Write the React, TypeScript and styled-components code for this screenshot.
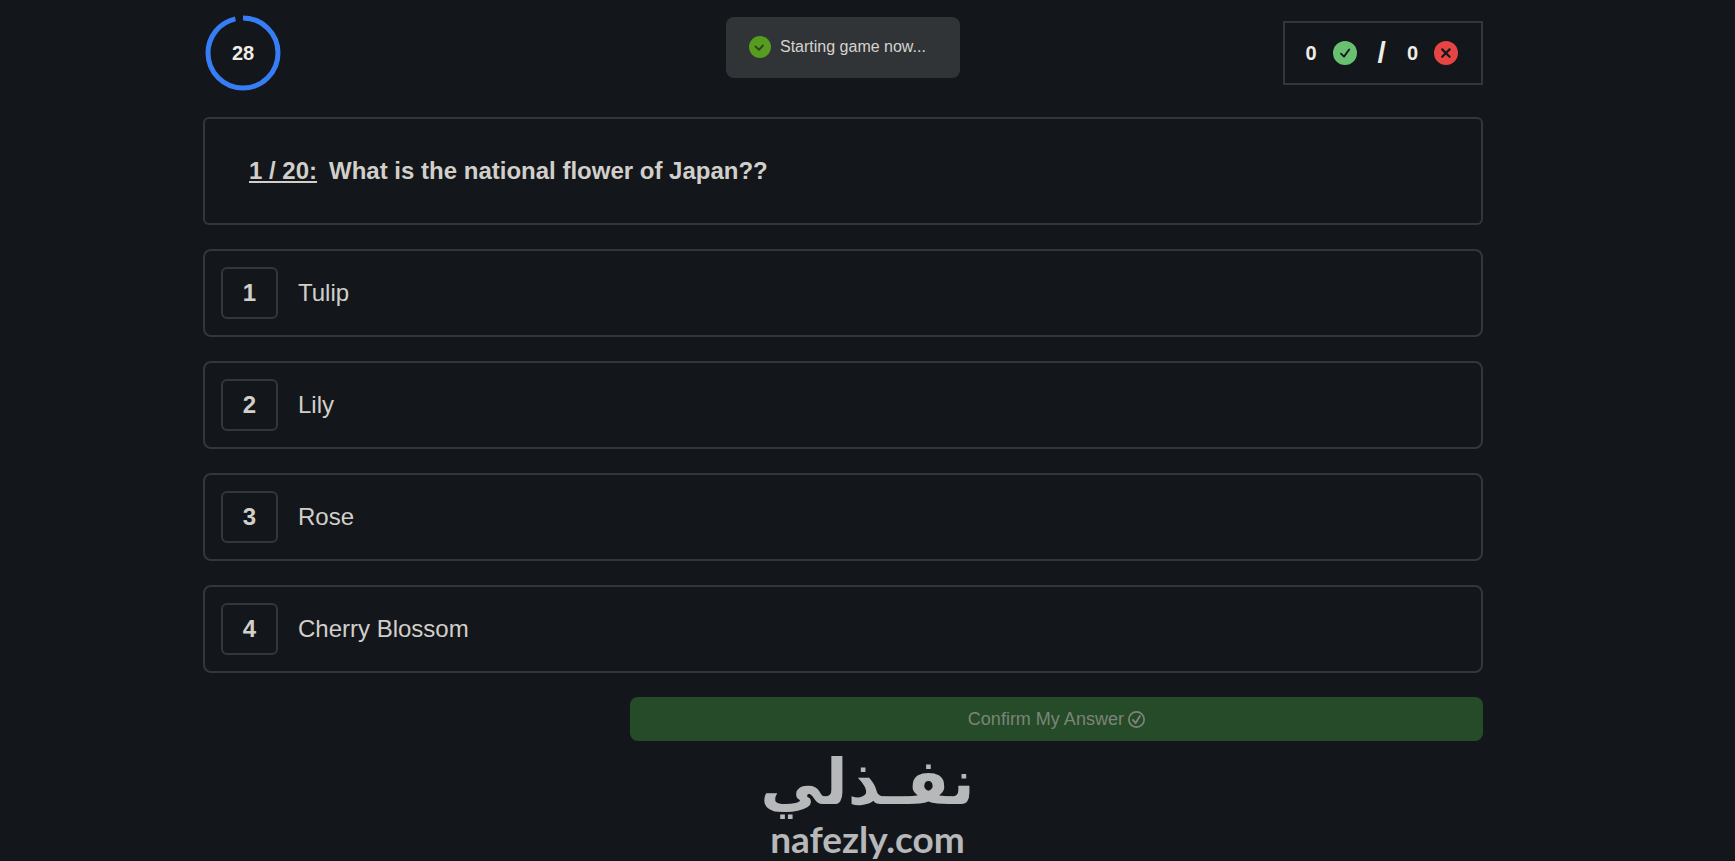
import React, { useState } from "react";
import styled, { createGlobalStyle } from "styled-components";

const GlobalStyle = createGlobalStyle`
  *, *::before, *::after { box-sizing: border-box; }
  body {
    margin: 0;
    background: #13171b;
    color: #d2cfca;
    font-family: "Liberation Sans", Arial, sans-serif;
  }
`;

const Page = styled.div`
  display: flex;
  flex-direction: column;
`;

const Game = styled.main`
  position: relative;
  display: flex;
  flex-direction: column;
  gap: 24px;
  width: 100%;
  padding: 13px 49px 0 0;
`;

const Column = styled.div`
  width: 100%;
  max-width: 1280px;
  margin: 0 auto;
`;

const Header = styled(Column)`
  display: flex;
  align-items: center;
  justify-content: space-between;
  height: 80px;
  padding-left: 2px;
`;

const Timer = styled.div`
  display: grid;
  place-items: center;
  color: #efece6;
  font-size: 20px;
  font-weight: 700;

  > * { grid-area: 1 / 1; }
`;

const Toast = styled.div`
  position: absolute;
  top: 17px;
  left: calc((100% - 49px) / 2);
  transform: translateX(-50%);
  display: flex;
  align-items: center;
  gap: 9px;
  width: 234px;
  height: 61px;
  padding: 0 23px 2px;
  border-radius: 8px;
  background: #313436;
  color: #d5d3cf;
  font-size: 16px;
  line-height: 20px;
  white-space: nowrap;
`;

const Score = styled.div`
  display: flex;
  align-items: center;
  gap: 21px;
  height: 64px;
  padding: 0 23px 0 20px;
  border: 2px solid #34373a;
  color: #efece6;
  font-size: 20px;
  font-weight: 700;
`;

const Tally = styled.span`
  display: flex;
  align-items: center;
  gap: 16px;
`;

const Slash = styled.span`
  font-size: 30px;
  line-height: 32px;
`;

const Question = styled(Column)`
  display: flex;
  align-items: center;
  gap: 12px;
  min-height: 108px;
  padding: 0 44px;
  border: 2px solid #34373a;
  border-radius: 6px;
  font-size: 24px;
  font-weight: 700;
  line-height: 32px;
`;

const Heading = styled.h1`
  margin: 0;
  font: inherit;
`;

const Progress = styled.span`
  text-decoration: underline;
  text-decoration-skip-ink: none;
  text-underline-offset: 2px;
  text-decoration-thickness: 2px;
`;

const Options = styled(Column)`
  display: flex;
  flex-direction: column;
  gap: 24px;
`;

const Option = styled.button<{ $selected: boolean }>`
  display: flex;
  align-items: center;
  gap: 20px;
  width: 100%;
  padding: 16px;
  border: 2px solid ${(p) => (p.$selected ? "#3b82f6" : "#34373a")};
  border-radius: 8px;
  background: transparent;
  color: inherit;
  font: inherit;
  font-size: 24px;
  line-height: 32px;
  text-align: left;
  cursor: pointer;
`;

const OptionNumber = styled.span`
  display: grid;
  place-items: center;
  width: 57px;
  height: 52px;
  border: 2px solid #34373a;
  border-radius: 6px;
  font-weight: 700;
`;

const Actions = styled(Column)`
  display: flex;
  justify-content: flex-end;
`;

const Confirm = styled.button`
  display: flex;
  align-items: center;
  justify-content: center;
  gap: 4px;
  width: 66.66%;
  height: 44px;
  padding: 0;
  border: 0;
  border-radius: 8px;
  background: #254b29;
  color: #7c8478;
  font: inherit;
  font-size: 18px;
  line-height: 24px;
`;

const Brand = styled.footer`
  display: flex;
  flex-direction: column;
  align-items: center;
  padding-top: 6px;
  color: #b7b8b9;
  font-weight: 700;
`;

const BrandArabic = styled.span`
  font-family: "DejaVu Sans", sans-serif;
  font-size: 63px;
  line-height: 72px;
`;

const BrandLatin = styled.span`
  font-family: Lato, sans-serif;
  font-size: 37px;
  line-height: 40px;
`;

const choices = ["Tulip", "Lily", "Rose", "Cherry Blossom"];

const TimerRing = () => (
  <svg width="76" height="76" viewBox="0 0 76 76" aria-hidden="true">
    <circle
      cx="38"
      cy="38"
      r="35"
      fill="none"
      stroke="#377ef6"
      strokeWidth="5"
      pathLength="100"
      strokeDasharray="96.5 3.5"
      transform="rotate(-90 38 38)"
    />
  </svg>
);

const CorrectIcon = () => (
  <svg width="24" height="24" viewBox="0 0 24 24" aria-hidden="true">
    <circle cx="12" cy="12" r="12" fill="#69c071" />
    <path d="M8 12.6l3 3L16.2 8.5" fill="none" stroke="#14171b" strokeWidth="1.8" strokeLinecap="round" strokeLinejoin="round" />
  </svg>
);

const WrongIcon = () => (
  <svg width="24" height="24" viewBox="0 0 24 24" aria-hidden="true">
    <circle cx="12" cy="12" r="12" fill="#e64543" />
    <path d="M8.2 8.4l7.4 7.4M15.6 8.4l-7.4 7.4" stroke="#14171b" strokeWidth="2.2" strokeLinecap="round" />
  </svg>
);

const ToastIcon = () => (
  <svg width="22" height="22" viewBox="0 0 22 22" aria-hidden="true">
    <circle cx="11" cy="11" r="11" fill="#559c20" />
    <path d="M6.5 10.5l3.5 3.3 4-4.3" fill="none" stroke="#2b4a20" strokeWidth="2" strokeLinecap="round" strokeLinejoin="round" />
  </svg>
);

const ConfirmIcon = () => (
  <svg width="17" height="17" viewBox="0 0 16 16" fill="none" stroke="currentColor" strokeLinecap="round" strokeLinejoin="round" aria-hidden="true">
    <circle cx="8" cy="8" r="7.2" strokeWidth="1.6" />
    <path d="M4.6 8.4l2.6 3 4-6.6" strokeWidth="1.8" />
  </svg>
);

export default function App() {
  const [selected, setSelected] = useState<number | null>(null);

  return (
    <Page>
      <GlobalStyle />
      <Game>
        <Header as="header">
          <Timer role="timer">
            <TimerRing />
            <span>28</span>
          </Timer>
          <Score>
            <Tally>
              0 <CorrectIcon />
            </Tally>
            <Slash>/</Slash>
            <Tally>
              0 <WrongIcon />
            </Tally>
          </Score>
        </Header>
        <Toast role="status">
          <ToastIcon />
          Starting game now...
        </Toast>
        <Question as="section">
          <Progress>1 / 20:</Progress>
          <Heading>What is the national flower of Japan??</Heading>
        </Question>
        <Options>
          {choices.map((choice, i) => (
            <Option key={choice} type="button" $selected={selected === i} onClick={() => setSelected(i)}>
              <OptionNumber>{i + 1}</OptionNumber>
              {choice}
            </Option>
          ))}
        </Options>
        <Actions>
          <Confirm type="button" disabled={selected === null}>
            Confirm My Answer
            <ConfirmIcon />
          </Confirm>
        </Actions>
      </Game>
      <Brand>
        <BrandArabic lang="ar" dir="rtl">نفـذلي</BrandArabic>
        <BrandLatin>nafezly.com</BrandLatin>
      </Brand>
    </Page>
  );
}
